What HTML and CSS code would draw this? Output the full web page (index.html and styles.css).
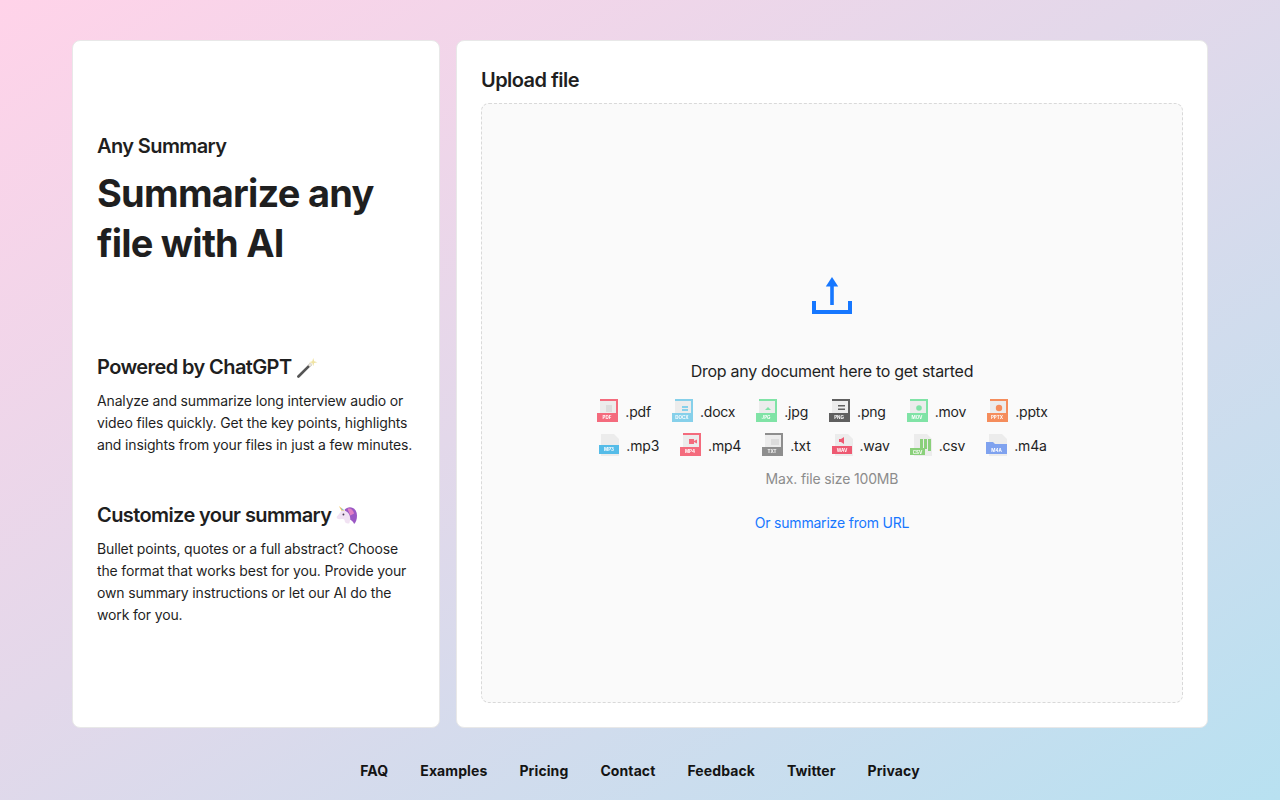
FILE: index.html
```html
<!DOCTYPE html>
<html lang="en">

<head>
    <meta charset="UTF-8">
    <title>Any Summary</title>
    <link rel="stylesheet" href="styles.css">
</head>

<body>
    <svg class="defs" width="0" height="0">
        <symbol id="sheet" viewBox="0 0 24 24">
            <path class="page" d="M4 1h13l5 5v17H4z" />
        </symbol>
        <symbol id="framed" viewBox="0 0 24 24">
            <path class="page" d="M4 1h18v22H4z" />
            <path class="edge" d="M4 0h18v23h-2V2H4z" />
        </symbol>
    </svg>

    <main class="panels">
        <section class="intro">
            <div class="brand">
                <p class="app-name">Any Summary</p>
                <h1>Summarize any file with AI</h1>
            </div>

            <div class="pitch pitch-first">
                <h2>Powered by ChatGPT
                    <svg class="emoji" viewBox="0 0 22 22">
                        <path d="M1.5 20.5L14 8" stroke="#555" stroke-width="2.8" stroke-linecap="round" />
                        <path d="M12.5 9.5L15 7" stroke="#e8e4da" stroke-width="3" />
                        <path d="M17 1l1 3.4 3.4 1-3.4 1-1 3.4-1-3.4-3.4-1 3.4-1z" fill="#efe3a2" />
                    </svg>
                </h2>
                <p>Analyze and summarize long interview audio or video files quickly. Get the key points, highlights and insights from your files in just a few minutes.</p>
            </div>

            <div class="pitch">
                <h2>Customize your summary
                    <svg class="emoji" viewBox="0 0 22 22">
                        <path d="M9 5C13 0 22 2 22 11c0 4-1 7-3 9-1-3-3-4-5-5z" fill="#9a58c4" />
                        <path d="M12 4c3-1 6 1 7 5l-4 2z" fill="#e07fc4" />
                        <path d="M3 1l6 5-2 2z" fill="#efc04f" />
                        <path d="M5 2.5l3 2.5-1 1z" fill="#6cc3e0" />
                        <path d="M6 6c5-1 9 3 9 9l-1 4c-2 1-5 0-5-3-1-2-3-1-5-1-3 0-4-2-3-3z" fill="#f1e2f3" />
                        <circle cx="7.8" cy="10" r="1" fill="#4a3a55" />
                    </svg>
                </h2>
                <p>Bullet points, quotes or a full abstract? Choose the format that works best for you. Provide your own summary instructions or let our AI do the work for you.</p>
            </div>
        </section>

        <section class="upload">
            <h2 class="upload-title">Upload file</h2>
            <div class="dropzone">
                <svg class="upload-icon" width="40" height="38" viewBox="0 0 40 38">
                    <path d="M20 28V6" stroke="#1677ff" stroke-width="3.6" />
                    <path d="M20 0l6.2 9.4H13.8z" fill="#1677ff" />
                    <path d="M2 24v11h36V24" fill="none" stroke="#1677ff" stroke-width="4" />
                </svg>
                <p class="drop-text">Drop any document here to get started</p>

                <ul class="types">
                    <li class="type red"><svg viewBox="0 0 24 24"><use href="#framed" /><path class="ghost" d="M10 6h6v7h-6z" /><path class="band" d="M1 14h21v9H1z" /><text x="11" y="20.4">PDF</text></svg>.pdf</li>
                    <li class="type sky"><svg viewBox="0 0 24 24"><use href="#framed" /><path class="mark" d="M11 7h6v2h-6zM11 10h6v2h-6z" /><path class="band" d="M1 14h21v9H1z" /><text x="11" y="20.4">DOCX</text></svg>.docx</li>
                    <li class="type mint"><svg viewBox="0 0 24 24"><use href="#framed" /><path class="mark" d="M10 11l3-3 3 3z" /><path class="band" d="M1 14h21v9H1z" /><text x="11" y="20.4">JPG</text></svg>.jpg</li>
                    <li class="type slate"><svg viewBox="0 0 24 24"><use href="#framed" /><path class="mark" d="M10 6h7v1.6h-7zM10 9.5h7v1.6h-7z" /><path class="band" d="M1 14h21v9H1z" /><text x="11" y="20.4">PNG</text></svg>.png</li>
                    <li class="type mint"><svg viewBox="0 0 24 24"><use href="#framed" /><circle class="mark" cx="13" cy="9" r="2.8" /><path class="band" d="M1 14h21v9H1z" /><text x="11" y="20.4">MOV</text></svg>.mov</li>
                    <li class="type orange"><svg viewBox="0 0 24 24"><use href="#framed" /><circle class="mark" cx="13" cy="9" r="3.2" /><path class="band" d="M1 14h21v9H1z" /><text x="11" y="20.4">PPTX</text></svg>.pptx</li>
                    <li class="type blue"><svg viewBox="0 0 24 24"><use href="#sheet" /><path class="band" d="M2 12h20v9H2z" /><text x="12" y="18.4">MP3</text></svg>.mp3</li>
                    <li class="type red"><svg viewBox="0 0 24 24"><use href="#framed" /><path class="mark" d="M10 6h5v5h-5zM15 8l3-1.5v4L15 9z" /><path class="band" d="M1 14h21v9H1z" /><text x="11" y="20.4">MP4</text></svg>.mp4</li>
                    <li class="type grey"><svg viewBox="0 0 24 24"><use href="#framed" /><path class="ghost" d="M10 6h8v6h-8z" /><path class="band" d="M1 14h21v9H1z" /><text x="11" y="20.4">TXT</text></svg>.txt</li>
                    <li class="type rose"><svg viewBox="0 0 24 24"><use href="#sheet" /><path class="mark" d="M8 6h2l3-2v7l-3-2H8z" /><path class="band" d="M1 13h20v8H1z" /><text x="11" y="18.8">WAV</text></svg>.wav</li>
                    <li class="type green"><svg viewBox="0 0 24 24"><use href="#sheet" /><path class="mark" d="M10 6h3v10h-3zM14 6h3v10h-3zM18 6h3v12h-3z" /><path class="band" d="M0 15h15v7H0z" /><text x="7.5" y="20.6">CSV</text></svg>.csv</li>
                    <li class="type indigo"><svg viewBox="0 0 24 24"><use href="#sheet" /><path class="band" d="M1 9h7l2 2h12v10H1z" /><text x="11.5" y="18.6">M4A</text></svg>.m4a</li>
                </ul>

                <p class="limit">Max. file size 100MB</p>
                <a class="url-link" href="#">Or summarize from URL</a>
            </div>
        </section>
    </main>

    <footer class="footer">
        <a href="#">FAQ</a>
        <a href="#">Examples</a>
        <a href="#">Pricing</a>
        <a href="#">Contact</a>
        <a href="#">Feedback</a>
        <a href="#">Twitter</a>
        <a href="#">Privacy</a>
    </footer>
</body>

</html>
```

FILE: styles.css
```css
* {
    box-sizing: border-box;
}

body {
    font-family: Inter, "Liberation Sans", sans-serif;
    margin: 0;
    height: 800px;
    padding: 40px 72px 0;
    overflow: hidden;
    background: linear-gradient(148deg, #ffd3e9 0%, #e3d8ea 45%, #b8e1f1 100%);
    color: #1f1f1f;
}

.defs {
    position: absolute;
}

.panels {
    display: flex;
    gap: 16px;
    height: 688px;
}

.intro,
.upload {
    background: #fff;
    border: 1px solid #e8e8e8;
    border-radius: 8px;
}

.intro {
    width: 368px;
    flex-shrink: 0;
    padding: 93px 24px 0;
}

.app-name {
    margin: 0;
    font-size: 20px;
    line-height: 24px;
    font-weight: 600;
    letter-spacing: -0.6px;
}

h1 {
    margin: 10px 0 0;
    font-size: 38px;
    line-height: 50px;
    font-weight: 700;
    letter-spacing: -0.77px;
}

.pitch {
    margin-top: 45px;
}

.pitch-first {
    margin-top: 85px;
}

.pitch h2 {
    display: flex;
    align-items: center;
    gap: 5px;
    margin: 0;
    font-size: 20px;
    line-height: 28px;
    font-weight: 600;
    letter-spacing: -0.6px;
}

.emoji {
    width: 21px;
    height: 21px;
}

.pitch p {
    margin: 9px 0 0;
    font-size: 14px;
    line-height: 22px;
    letter-spacing: -0.15px;
}

.upload {
    flex: 1;
    display: flex;
    flex-direction: column;
    padding: 24px;
}

.upload-title {
    margin: 0 0 8px;
    font-size: 20px;
    line-height: 30px;
    font-weight: 600;
    letter-spacing: -0.55px;
}

.dropzone {
    flex: 1;
    display: flex;
    flex-direction: column;
    align-items: center;
    padding-top: 173px;
    background: #fafafa;
    border: 1px dashed #d9d9d9;
    border-radius: 8px;
}

.upload-icon {
    display: block;
}

.drop-text {
    margin: 44px 0 0;
    font-size: 16px;
    line-height: 24px;
    letter-spacing: -0.29px;
}

.types {
    display: flex;
    flex-wrap: wrap;
    justify-content: center;
    width: 500px;
    margin: 11px 0 0;
    padding: 0;
    list-style: none;
}

.type {
    display: flex;
    align-items: center;
    gap: 5px;
    height: 34px;
    margin-right: 20px;
    font-size: 14px;
    letter-spacing: -0.2px;
}

.type svg {
    width: 24px;
    height: 24px;
    filter: blur(0.5px);
}

.page {
    fill: #ececec;
}

.ghost {
    fill: #dcdcdc;
}

.type text {
    fill: #fff;
    font-size: 4.5px;
    font-weight: 700;
    letter-spacing: 0;
    text-anchor: middle;
}

.red { --tone: #f46b7d; }
.sky { --tone: #86d0ea; }
.mint { --tone: #80e3a6; }
.slate { --tone: #5f5f5f; }
.orange { --tone: #f58d5c; }
.blue { --tone: #55bce8; }
.grey { --tone: #8e8e8e; }
.rose { --tone: #ee5a72; }
.green { --tone: #8ad07a; }
.indigo { --tone: #7fa2ef; }

.edge,
.band,
.mark {
    fill: var(--tone);
}

.limit {
    margin: 6px 0 0;
    font-size: 14px;
    line-height: 22px;
    letter-spacing: -0.15px;
    color: #8c8c8c;
}

.url-link {
    margin-top: 22px;
    font-size: 14px;
    line-height: 22px;
    letter-spacing: -0.19px;
    color: #1677ff;
    text-decoration: none;
}

.footer {
    display: flex;
    justify-content: center;
    gap: 32px;
    padding-top: 34px;
}

.footer a {
    font-size: 14px;
    line-height: 18px;
    font-weight: 700;
    letter-spacing: 0.1px;
    color: #141414;
    text-decoration: none;
}
```
